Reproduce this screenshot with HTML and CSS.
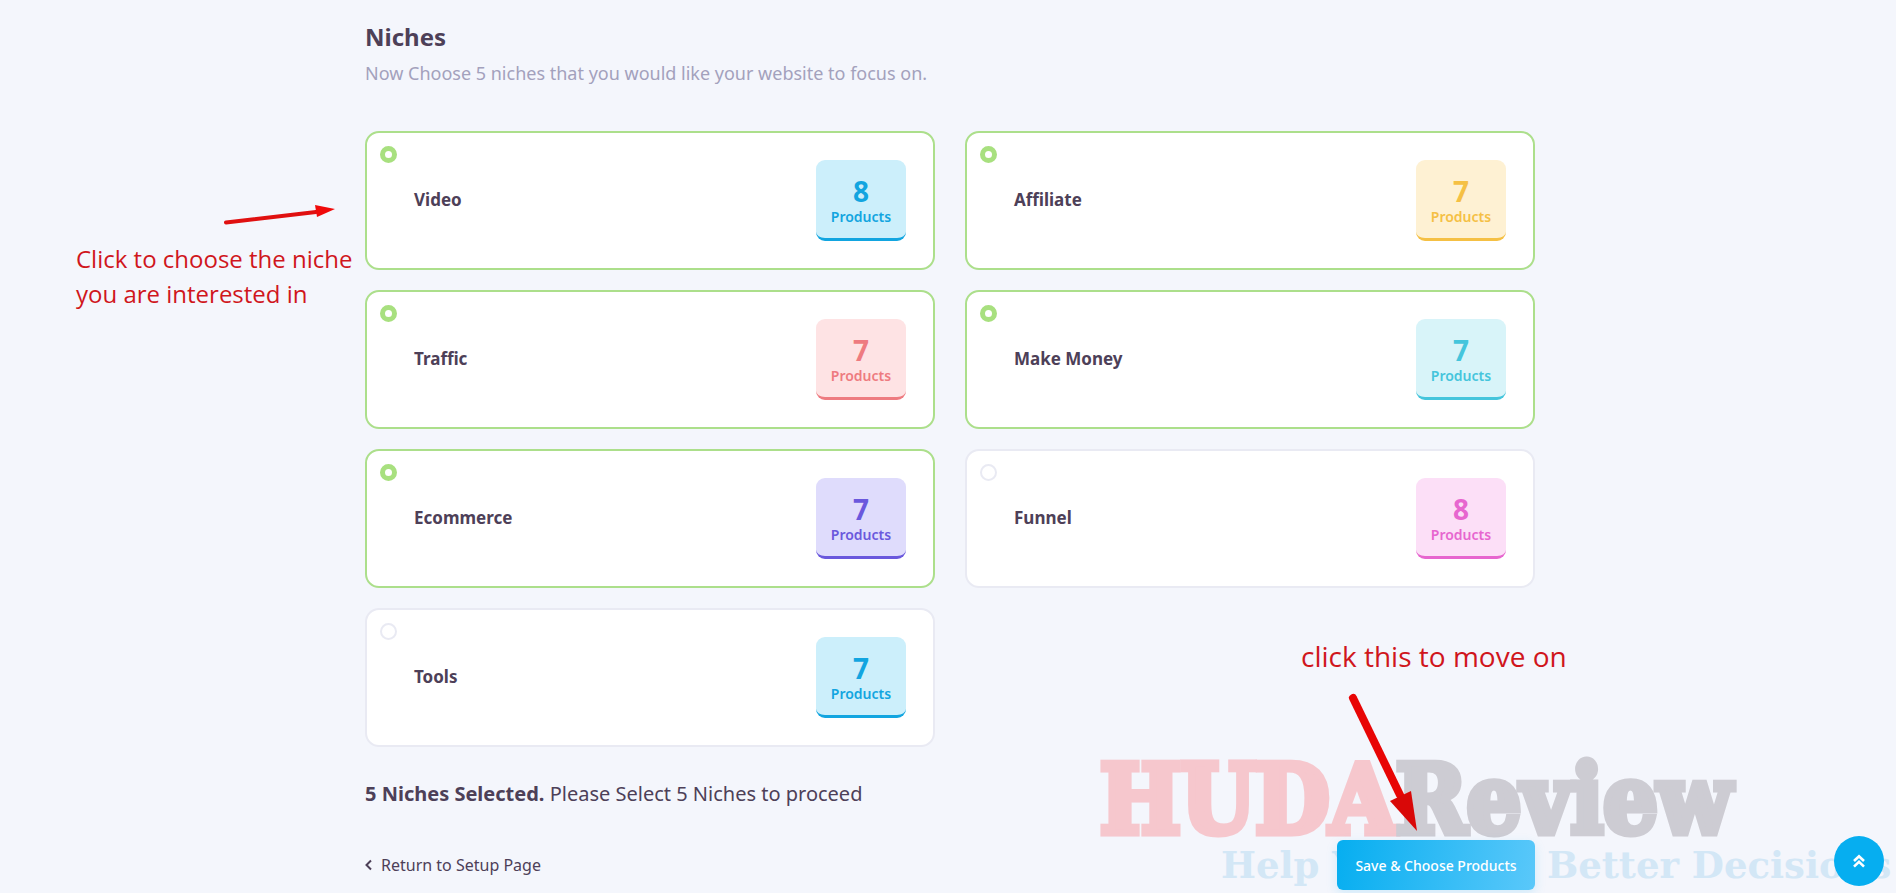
FILE: index.html
```html
<!DOCTYPE html>
<html lang="en">
<head>
    <meta charset="UTF-8">
    <meta name="viewport" content="width=device-width, initial-scale=1.0">
    <title>Niches</title>
    <link rel="stylesheet" href="styles.css">
</head>
<body>
    <main class="page">
        <form class="container">
            <div class="watermark">
                <div class="watermark-name"><span class="watermark-red">HUDA</span>Review</div>
                <div class="watermark-slogan">Help You Make Better Decisions</div>
            </div>

            <h1>Niches</h1>
            <p class="subtitle">Now Choose 5 niches that you would like your website to focus on.</p>

            <div class="niches">
                <label class="niche">
                    <input type="checkbox" name="niche" value="video" checked>
                    <span class="niche-name">Video</span>
                    <span class="badge blue"><span class="count">8</span>Products</span>
                </label>
                <label class="niche">
                    <input type="checkbox" name="niche" value="affiliate" checked>
                    <span class="niche-name">Affiliate</span>
                    <span class="badge yellow"><span class="count">7</span>Products</span>
                </label>
                <label class="niche">
                    <input type="checkbox" name="niche" value="traffic" checked>
                    <span class="niche-name">Traffic</span>
                    <span class="badge red"><span class="count">7</span>Products</span>
                </label>
                <label class="niche">
                    <input type="checkbox" name="niche" value="make-money" checked>
                    <span class="niche-name">Make Money</span>
                    <span class="badge teal"><span class="count">7</span>Products</span>
                </label>
                <label class="niche">
                    <input type="checkbox" name="niche" value="ecommerce" checked>
                    <span class="niche-name">Ecommerce</span>
                    <span class="badge purple"><span class="count">7</span>Products</span>
                </label>
                <label class="niche">
                    <input type="checkbox" name="niche" value="funnel">
                    <span class="niche-name">Funnel</span>
                    <span class="badge pink"><span class="count">8</span>Products</span>
                </label>
                <label class="niche">
                    <input type="checkbox" name="niche" value="tools">
                    <span class="niche-name">Tools</span>
                    <span class="badge blue"><span class="count">7</span>Products</span>
                </label>
            </div>

            <p class="status"><strong>5 Niches Selected.</strong> Please Select 5 Niches to proceed</p>

            <div class="actions">
                <a class="back" href="#">
                    <svg width="8" height="12" viewBox="0 0 8 12" fill="none" stroke="currentColor" stroke-width="2"><path d="M6 1.5 L1.5 6 L6 10.5"/></svg>
                    Return to Setup Page
                </a>
                <button class="save" type="submit">Save &amp; Choose Products</button>
            </div>

            <!-- Help notes -->
            <p class="note note-choose">Click to choose the niche<br>you are interested in</p>
            <svg class="arrow arrow-choose" width="116" height="24" viewBox="0 0 116 24">
                <path d="M4 18.5 L94 8" stroke="#e01010" stroke-width="4" stroke-linecap="round"/>
                <path d="M93 1 L113 5 L95 13 Z" fill="#f00a0a"/>
            </svg>
            <p class="note note-next">click this to move on</p>
            <svg class="arrow arrow-next" width="76" height="142" viewBox="0 0 76 142">
                <path d="M8 8 L55 105" stroke="#e80505" stroke-width="8" stroke-linecap="round"/>
                <path d="M45 111 L66 101 L72 141 Z" fill="#d90808"/>
            </svg>
        </form>
    </main>

    <button class="to-top" type="button" aria-label="Back to top">
        <svg width="14" height="14" viewBox="0 0 14 14" fill="none" stroke="#fff" stroke-width="2.6"><path d="M2 7 L7 2.2 L12 7 M2 12.6 L7 7.8 L12 12.6"/></svg>
    </button>
</body>
</html>
```
FILE: styles.css
```css
body {
    margin: 0;
    background-color: #f4f6fc;
    color: #4d4058;
    font-family: "Noto Sans", "Open Sans", sans-serif;
    font-size: 16px;
}
.page {
    min-height: 100vh;
    box-sizing: border-box;
    padding: 22px 0 0 4px;
    overflow: hidden;
}
.container {
    position: relative;
    max-width: 1170px;
    margin: 0 auto;
}
h1 {
    margin: 0 0 8px;
    font-size: 24px;
    line-height: 30px;
}
.subtitle {
    margin: 0 0 45px;
    color: #a3a1bc;
    font-size: 18px;
    line-height: 26px;
}
.niches {
    display: grid;
    grid-template-columns: 1fr 1fr;
    gap: 20px 30px;
}
.niche {
    position: relative;
    display: flex;
    align-items: center;
    justify-content: space-between;
    box-sizing: border-box;
    min-height: 139px;
    padding: 27px 27px 27px 47px;
    border: 2px solid #e9eaf3;
    border-radius: 14px;
    background-color: #fff;
    cursor: pointer;
}
.niche:has(input:checked) {
    border-color: #acdf8b;
}
.niche input {
    position: absolute;
    top: 13px;
    left: 13px;
    appearance: none;
    box-sizing: border-box;
    width: 17px;
    height: 17px;
    margin: 0;
    border: 2px solid #e9eaf3;
    border-radius: 50%;
    background-color: #fff;
}
.niche input:checked {
    border: 5px solid #a8e07f;
}
.niche-name {
    padding-bottom: 2px;
    font-size: 17px;
    font-weight: 700;
}
.badge {
    box-sizing: border-box;
    width: 90px;
    padding: 16px 0 10px;
    border-bottom: 3px solid;
    border-radius: 9px;
    font-size: 14px;
    font-weight: 600;
    line-height: 22px;
    text-align: center;
}
.count {
    display: block;
    font-size: 28px;
    font-weight: 700;
    line-height: 30px;
}
.blue {
    background-color: #cceffb;
    color: #12a5e0;
}
.yellow {
    background-color: #fef1d3;
    color: #f5c044;
}
.red {
    background-color: #fee3e4;
    color: #ee7b80;
}
.teal {
    background-color: #d8f4f9;
    color: #45c5dc;
}
.purple {
    background-color: #dfdcfc;
    color: #6a58dd;
}
.pink {
    background-color: #fcdff7;
    color: #e766cf;
}
.status {
    margin: 34px 0 33px;
    font-size: 20px;
    line-height: 26px;
}
.actions {
    position: relative;
    display: flex;
    align-items: center;
    justify-content: space-between;
}
.back {
    display: flex;
    align-items: center;
    gap: 8px;
    color: inherit;
    font-size: 16px;
    text-decoration: none;
}
.save {
    width: 198px;
    height: 50px;
    padding: 0;
    border: none;
    border-radius: 6px;
    background: linear-gradient(100deg, #06aef0, #5ac8fa);
    box-shadow: 0 4px 12px rgba(6, 174, 240, 0.15);
    color: #fff;
    font-family: inherit;
    font-size: 14px;
    font-weight: 500;
    cursor: pointer;
}
.to-top {
    position: fixed;
    right: 12px;
    bottom: 7px;
    display: flex;
    align-items: center;
    justify-content: center;
    width: 50px;
    height: 50px;
    padding: 0;
    border: none;
    border-radius: 50%;
    background-color: #06aef0;
    cursor: pointer;
}
.note {
    position: absolute;
    margin: 0;
    color: #d0161c;
    font-family: "Open Sans", "Noto Sans", sans-serif;
    font-weight: 400;
    white-space: nowrap;
}
.note-choose {
    top: 219px;
    left: -289px;
    font-size: 24px;
    line-height: 35px;
}
.note-next {
    top: 617px;
    left: 936px;
    font-size: 28px;
    line-height: 35px;
}
.arrow {
    position: absolute;
}
.arrow-choose {
    top: 182px;
    left: -143px;
}
.arrow-next {
    top: 668px;
    left: 980px;
}
.watermark {
    position: absolute;
    top: 724px;
    left: 735px;
    color: #cdccd3;
    font-family: "DejaVu Serif Condensed", "DejaVu Serif", serif;
    font-weight: 700;
    white-space: nowrap;
}
.watermark-name {
    font-size: 95px;
    line-height: 108px;
    -webkit-text-stroke: 7px;
}
.watermark-red {
    color: #f6c7cd;
}
.watermark-slogan {
    padding-left: 121px;
    color: #d3e7f6;
    font-family: "DejaVu Serif", serif;
    font-size: 37px;
    line-height: 22px;
}
```
